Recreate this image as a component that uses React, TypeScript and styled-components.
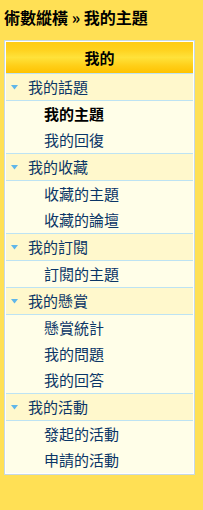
import React from "react";
import styled, { createGlobalStyle } from "styled-components";

const Global = createGlobalStyle`
  html, body { margin: 0; padding: 0; background: #ffe055; }
  body { font-family: "Noto Sans CJK TC", "Noto Sans CJK SC", sans-serif; }
`;

const Page = styled.div`
  padding: 4px 0 36px 4px;
  background: #ffe055;
  min-height: 510px;
  box-sizing: border-box;
`;

const Title = styled.div`
  font-size: 16px;
  font-weight: bold;
  line-height: 20px;
  color: #000;
  height: 20px;
  margin-top: 3px;
  letter-spacing: 0;
`;

const Box = styled.div`
  margin-top: 13px;
  width: 191px;
  box-sizing: border-box;
  border: 1px solid #c6d9e3;
  padding: 1px;
  background: #ffffff;
`;

const Header = styled.div`
  height: 31px;
  display: flex;
  align-items: center;
  justify-content: center;
  font-size: 15px;
  font-weight: bold;
  color: #000;
  background: linear-gradient(
    to bottom,
    #ffcc14 0%,
    #ffd21e 25%,
    #ffe23a 50%,
    #ffd01a 75%,
    #ffc200 100%
  );
  border-bottom: 1px solid #bfe3f2;
`;

const Category = styled.div`
  height: 26px;
  display: flex;
  align-items: center;
  background: #fff8cc;
  border-bottom: 1px solid #bde3f3;
  color: #0a3566;
  font-size: 15px;
  line-height: 26px;
`;

const Arrow = styled.svg`
  width: 7px;
  height: 5px;
  margin-left: 5px;
  margin-right: 10px;
  flex: none;
`;

const Group = styled.div<{ $last?: boolean }>`
  background: #fffee8;
  border-bottom: ${(p) => (p.$last ? "none" : "1px solid #bde3f3")};
`;

const Item = styled.div<{ $active?: boolean }>`
  height: 26px;
  line-height: 26px;
  padding-left: 38px;
  font-size: 15px;
  color: ${(p) => (p.$active ? "#000" : "#0a3566")};
  font-weight: ${(p) => (p.$active ? "bold" : "normal")};
`;

const sections: { title: string; items: string[] }[] = [
  { title: "我的話題", items: ["我的主題", "我的回復"] },
  { title: "我的收藏", items: ["收藏的主題", "收藏的論壇"] },
  { title: "我的訂閱", items: ["訂閱的主題"] },
  { title: "我的懸賞", items: ["懸賞統計", "我的問題", "我的回答"] },
  { title: "我的活動", items: ["發起的活動", "申請的活動"] },
];

export default function App() {
  return (
    <>
      <Global />
      <Page>
        <Title>術數縱橫 » 我的主題</Title>
        <Box>
          <Header>我的</Header>
          {sections.map((s, i) => (
            <React.Fragment key={s.title}>
              <Category>
                <Arrow viewBox="0 0 7 5">
                  <polygon points="0,0 7,0 3.5,4.5" fill="#5fb6ea" />
                </Arrow>
                {s.title}
              </Category>
              <Group $last={i === sections.length - 1}>
                {s.items.map((it) => (
                  <Item key={it} $active={it === "我的主題"}>
                    {it}
                  </Item>
                ))}
              </Group>
            </React.Fragment>
          ))}
        </Box>
      </Page>
    </>
  );
}
